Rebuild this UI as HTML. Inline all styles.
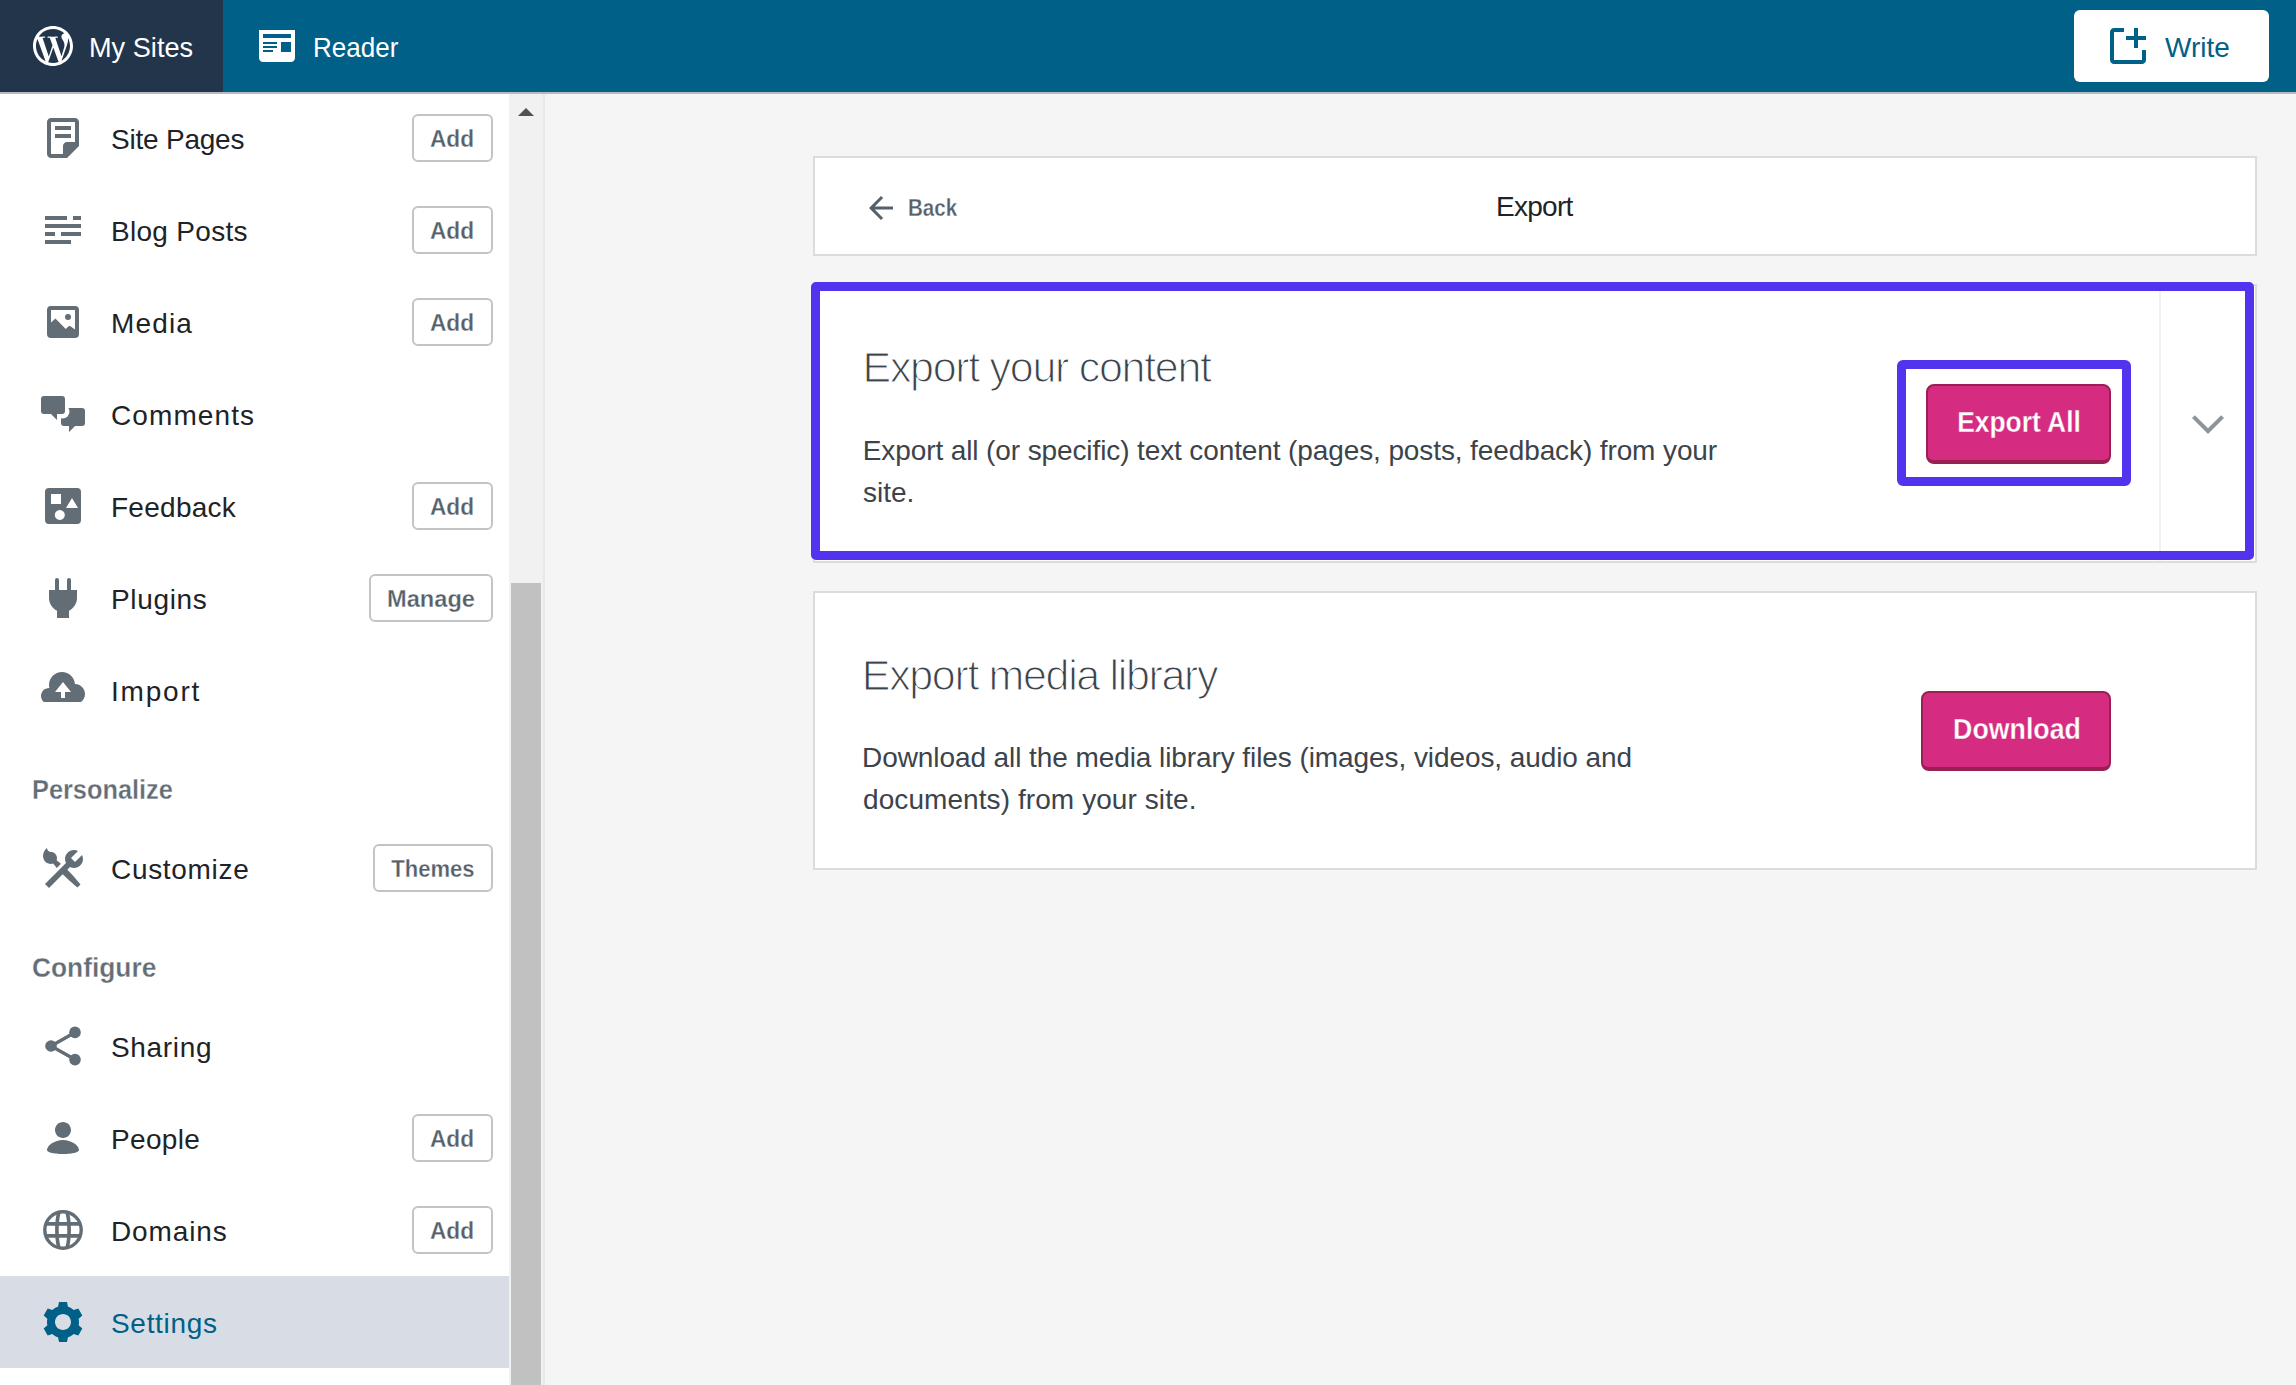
<!DOCTYPE html>
<html><head><meta charset="utf-8"><title>Export</title>
<style>
html,body{margin:0;padding:0;}
body{width:2296px;height:1385px;overflow:hidden;position:relative;background:#f5f5f5;font-family:"Liberation Sans",sans-serif;}
.t{position:absolute;white-space:nowrap;line-height:1;}
.i{position:absolute;display:block;}
.b{position:absolute;box-sizing:border-box;}
</style></head><body>
<div class="b" style="left:0;top:0;width:2296px;height:92px;background:#016087"></div>
<div class="b" style="left:0;top:92px;width:2296px;height:2px;background:#b6bbbf"></div>
<div class="b" style="left:0;top:0;width:223px;height:92px;background:#23354b"></div>
<svg class="i" style="left:29px;top:22px" width="48" height="48" viewBox="0 0 24 24"><g fill="#fff"><path d="M12 2C6.477 2 2 6.477 2 12s4.477 10 10 10 10-4.477 10-10S17.523 2 12 2zM3.5 12c0-1.232.264-2.402.736-3.459L8.291 19.65C5.456 18.272 3.5 15.365 3.5 12zm8.5 8.5c-.834 0-1.64-.12-2.401-.345l2.551-7.411 2.612 7.158c.018.042.039.081.061.117-.884.311-1.832.481-2.823.481zm1.172-12.485c.512-.027.973-.081.973-.081.458-.054.404-.727-.054-.701 0 0-1.377.108-2.266.108-.835 0-2.239-.108-2.239-.108-.459-.026-.512.674-.054.701 0 0 .434.054.892.081l1.324 3.629-1.860 5.579-3.096-9.208c.512-.027.973-.081.973-.081.458-.054.403-.727-.055-.701 0 0-1.376.108-2.265.108-.160 0-.347-.004-.547-.010C6.418 4.878 9.030 3.500 12 3.500c2.213 0 4.228.846 5.740 2.232-.037-.002-.072-.007-.110-.007-.835 0-1.427.727-1.427 1.509 0 .701.404 1.293.835 1.994.323.566.701 1.293.701 2.344 0 .727-.280 1.572-.647 2.748l-.848 2.833-3.072-9.138zm3.101 11.332l2.596-7.506c.485-1.213.646-2.182.646-3.045 0-.313-.021-.603-.057-.874.664 1.211 1.042 2.601 1.042 4.080 0 3.136-1.700 5.874-4.227 7.345z"/></g></svg>
<div class="t" style="left:88.6px;top:33.80px;font-size:28px;color:#fff;font-weight:400;transform:scaleX(0.97);transform-origin:0 0;">My Sites</div>
<svg class="i" style="left:253px;top:22px" width="48" height="48" viewBox="0 0 24 24"><g fill="#fff"><path d="M3 4v14c0 1.105.895 2 2 2h14c1.105 0 2-.895 2-2V4H3zm7 11H5v-1h5v1zm2-2H5v-1h7v1zm0-2H5v-1h7v1zm7 4h-5v-5h5v5zm0-7H5V6h14v2z"/></g></svg>
<div class="t" style="left:312.6px;top:33.80px;font-size:28px;color:#fff;font-weight:400;transform:scaleX(0.93);transform-origin:0 0;">Reader</div>
<div class="b" style="left:2074px;top:10px;width:195px;height:72px;background:#fff;border-radius:6px"></div>
<svg class="i" style="left:2104px;top:22px" width="48" height="48" viewBox="0 0 24 24"><g fill="#016087"><path d="M21 14v5c0 1.105-.895 2-2 2H5c-1.105 0-2-.895-2-2V5c0-1.105.895-2 2-2h5v2H5v14h14v-5h2z"/><path d="M17 7V3h-2v4h-4v2h4v4h2V9h4V7h-4z"/></g></svg>
<div class="t" style="left:2165px;top:33.80px;font-size:28px;color:#016087;font-weight:400;">Write</div>
<div class="b" style="left:0;top:94px;width:509px;height:1291px;background:#fff"></div>
<div class="b" style="left:509px;top:94px;width:34px;height:1291px;background:#f1f1f1"></div>
<div class="b" style="left:543px;top:94px;width:2px;height:1291px;background:#e8e8e8"></div>
<div class="b" style="left:511px;top:583px;width:30px;height:802px;background:#c1c1c1"></div>
<svg class="i" style="left:509px;top:94px" width="34" height="34"><path d="M9 22L17 14L25 22Z" fill="#505050"/></svg>
<div class="b" style="left:0;top:1276px;width:509px;height:92px;background:#d8dde5"></div>
<svg class="i" style="left:39px;top:114px" width="48" height="48" viewBox="0 0 24 24"><g fill="#636d75"><path d="M16 8H8V6h8v2zm0 2H8v2h8v-2zm4-6v12l-6 6H6c-1.105 0-2-.895-2-2V4c0-1.105.895-2 2-2h12c1.105 0 2 .895 2 2zm-2 10V4H6v16h6v-4c0-1.105.895-2 2-2h4z"/></g></svg>
<div class="t" style="left:111px;top:125.90px;font-size:28px;color:#1e2327;font-weight:400;letter-spacing:-0.22px;">Site Pages</div>
<div class="b" style="left:412px;top:114px;width:81px;height:48px;border:2px solid #c3c4c7;border-radius:6px;background:#fff"></div>
<div class="t" style="left:52.0px;width:800px;text-align:center;top:126.68px;font-size:24px;color:#55606a;font-weight:700;transform:scaleX(0.946);transform-origin:50% 0;-webkit-text-stroke:0.3px #fff;">Add</div>
<svg class="i" style="left:39px;top:206px" width="48" height="48" viewBox="0 0 24 24"><g fill="#636d75"><path d="M16 19H3v-2h13v2zm5-10H3v2h18V9zM3 5v2h11V5H3zm14 0v2h4V5h-4zm-6 8v2h10v-2H11zm-8 0v2h5v-2H3z"/></g></svg>
<div class="t" style="left:111px;top:217.90px;font-size:28px;color:#1e2327;font-weight:400;letter-spacing:0.3px;">Blog Posts</div>
<div class="b" style="left:412px;top:206px;width:81px;height:48px;border:2px solid #c3c4c7;border-radius:6px;background:#fff"></div>
<div class="t" style="left:52.0px;width:800px;text-align:center;top:218.68px;font-size:24px;color:#55606a;font-weight:700;transform:scaleX(0.946);transform-origin:50% 0;-webkit-text-stroke:0.3px #fff;">Add</div>
<svg class="i" style="left:39px;top:298px" width="48" height="48" viewBox="0 0 24 24"><g fill="#636d75"><path fill-rule="evenodd" d="M6 4h12a2 2 0 0 1 2 2v12a2 2 0 0 1-2 2H6a2 2 0 0 1-2-2V6a2 2 0 0 1 2-2zM6 6v6.3l2.2-2.1 5.2 5.3 1.3-1.25c.35-.33.85-.33 1.2 0L18 15.8V6z"/><circle cx="14.5" cy="9.5" r="1.5"/></g></svg>
<div class="t" style="left:111px;top:309.90px;font-size:28px;color:#1e2327;font-weight:400;letter-spacing:1.15px;">Media</div>
<div class="b" style="left:412px;top:298px;width:81px;height:48px;border:2px solid #c3c4c7;border-radius:6px;background:#fff"></div>
<div class="t" style="left:52.0px;width:800px;text-align:center;top:310.68px;font-size:24px;color:#55606a;font-weight:700;transform:scaleX(0.946);transform-origin:50% 0;-webkit-text-stroke:0.3px #fff;">Add</div>
<svg class="i" style="left:39px;top:390px" width="48" height="48" viewBox="0 0 24 24"><g fill="#636d75"><path d="M12.5 9H21.5a1.5 1.5 0 0 1 1.5 1.5v6a1.5 1.5 0 0 1-1.5 1.5H18l-3 3v-3h-2.5a1.5 1.5 0 0 1-1.5-1.5v-6A1.5 1.5 0 0 1 12.5 9z"/><circle cx="11.8" cy="10.8" r="3.45" fill="#fff"/><path d="M2.5 3h9a1.5 1.5 0 0 1 1.5 1.5v6a1.5 1.5 0 0 1-1.5 1.5H9v3l-3-3H2.5A1.5 1.5 0 0 1 1 10.5v-6A1.5 1.5 0 0 1 2.5 3z"/></g></svg>
<div class="t" style="left:111px;top:401.90px;font-size:28px;color:#1e2327;font-weight:400;letter-spacing:1.1px;">Comments</div>
<svg class="i" style="left:39px;top:482px" width="48" height="48" viewBox="0 0 24 24"><g fill="#636d75"><path fill-rule="evenodd" d="M5 3h14a2 2 0 0 1 2 2v14a2 2 0 0 1-2 2H5a2 2 0 0 1-2-2V5a2 2 0 0 1 2-2zM6 6v5h5V6zM16.5 8l-3 5h6zM10.4 14a2.5 2.5 0 1 0 0.001 0z"/></g></svg>
<div class="t" style="left:111px;top:493.90px;font-size:28px;color:#1e2327;font-weight:400;letter-spacing:0.27px;">Feedback</div>
<div class="b" style="left:412px;top:482px;width:81px;height:48px;border:2px solid #c3c4c7;border-radius:6px;background:#fff"></div>
<div class="t" style="left:52.0px;width:800px;text-align:center;top:494.68px;font-size:24px;color:#55606a;font-weight:700;transform:scaleX(0.946);transform-origin:50% 0;-webkit-text-stroke:0.3px #fff;">Add</div>
<svg class="i" style="left:39px;top:574px" width="48" height="48" viewBox="0 0 24 24"><g fill="#636d75"><path d="M16 8V3c0-.552-.448-1-1-1s-1 .448-1 1v5h-4V3c0-.552-.448-1-1-1s-1 .448-1 1v5H5v4c0 2.79 1.637 5.193 4 6.317V22h6v-3.683c2.363-1.124 4-3.527 4-6.317V8h-3z"/></g></svg>
<div class="t" style="left:111px;top:585.90px;font-size:28px;color:#1e2327;font-weight:400;letter-spacing:0.67px;">Plugins</div>
<div class="b" style="left:369px;top:574px;width:124px;height:48px;border:2px solid #c3c4c7;border-radius:6px;background:#fff"></div>
<div class="t" style="left:30.5px;width:800px;text-align:center;top:586.68px;font-size:24px;color:#55606a;font-weight:700;transform:scaleX(0.984);transform-origin:50% 0;-webkit-text-stroke:0.3px #fff;">Manage</div>
<svg class="i" style="left:39px;top:666px" width="48" height="48" viewBox="0 0 24 24"><g fill="#636d75"><path d="M18 9c-.01 0-.017.002-.025.003C17.72 5.646 14.922 3 11.5 3 7.91 3 5 5.910 5 9.5c0 .524.07 1.030.186 1.520C5.123 11.015 5.064 11 5 11c-2.210 0-4 1.790-4 4 0 1.202.540 2.267 1.380 3h18.593C22.196 17.090 23 15.643 23 14c0-2.760-2.240-5-5-5zm-5 4v3h-2v-3H8l4-5 4 5h-3z"/></g></svg>
<div class="t" style="left:111px;top:677.90px;font-size:28px;color:#1e2327;font-weight:400;letter-spacing:1.8px;">Import</div>
<svg class="i" style="left:39px;top:844px" width="48" height="48" viewBox="0 0 24 24"><g fill="#636d75"><path d="M2 6c0-1.505.78-3.08 2-4 0 .845.69 2 2 2 1.657 0 3 1.343 3 3 0 .386-.08.752-.212 1.09.74.594 1.476 1.19 2.19 1.81L8.9 11.98c-.62-.716-1.214-1.454-1.807-2.192C6.753 9.92 6.387 10 6 10c-2.21 0-4-1.79-4-4zm12.152 6.848l1.34-1.34c.607.304 1.283.492 2.008.492 2.485 0 4.5-2.015 4.5-4.5 0-.725-.188-1.4-.493-2.007L18 9l-2-2 3.507-3.507C18.9 3.188 18.225 3 17.5 3 15.015 3 13 5.015 13 7.5c0 .725.188 1.4.493 2.007L3 20l2 2 6.848-6.848c1.885 1.928 3.874 3.753 5.977 5.45l1.425 1.148 1.5-1.5-1.148-1.425c-1.697-2.103-3.522-4.092-5.45-5.977z"/></g></svg>
<div class="t" style="left:111px;top:855.90px;font-size:28px;color:#1e2327;font-weight:400;letter-spacing:0.68px;">Customize</div>
<div class="b" style="left:373px;top:844px;width:120px;height:48px;border:2px solid #c3c4c7;border-radius:6px;background:#fff"></div>
<div class="t" style="left:32.5px;width:800px;text-align:center;top:856.68px;font-size:24px;color:#55606a;font-weight:700;transform:scaleX(0.918);transform-origin:50% 0;-webkit-text-stroke:0.3px #fff;">Themes</div>
<svg class="i" style="left:39px;top:1022px" width="48" height="48" viewBox="0 0 24 24"><g fill="#636d75"><circle cx="6" cy="12" r="2.9"/><circle cx="18" cy="5.2" r="2.9"/><circle cx="18" cy="18.8" r="2.9"/><path d="M6 12L18 5.2M6 12L18 18.8" stroke="#636d75" stroke-width="1.7"/></g></svg>
<div class="t" style="left:111px;top:1033.90px;font-size:28px;color:#1e2327;font-weight:400;letter-spacing:0.67px;">Sharing</div>
<svg class="i" style="left:39px;top:1114px" width="48" height="48" viewBox="0 0 24 24"><g fill="#636d75"><path d="M12 4c2.21 0 4 1.79 4 4s-1.79 4-4 4-4-1.79-4-4 1.79-4 4-4zm0 16s8 0 8-2c0-2.4-3.9-5-8-5s-8 2.6-8 5c0 2 8 2 8 2z"/></g></svg>
<div class="t" style="left:111px;top:1125.90px;font-size:28px;color:#1e2327;font-weight:400;letter-spacing:0.32px;">People</div>
<div class="b" style="left:412px;top:1114px;width:81px;height:48px;border:2px solid #c3c4c7;border-radius:6px;background:#fff"></div>
<div class="t" style="left:52.0px;width:800px;text-align:center;top:1126.68px;font-size:24px;color:#55606a;font-weight:700;transform:scaleX(0.946);transform-origin:50% 0;-webkit-text-stroke:0.3px #fff;">Add</div>
<svg class="i" style="left:39px;top:1206px" width="48" height="48" viewBox="0 0 24 24"><g fill="#636d75"><defs><clipPath id="gc"><circle cx="12" cy="12" r="9.5"/></clipPath></defs><g fill="none" stroke="#636d75"><circle cx="12" cy="12" r="9.1" stroke-width="1.7"/><g clip-path="url(#gc)" stroke-width="1.82"><ellipse cx="12" cy="12" rx="3.05" ry="12"/><path d="M2 8.97H22M2 14.95H22"/></g></g></g></svg>
<div class="t" style="left:111px;top:1217.90px;font-size:28px;color:#1e2327;font-weight:400;letter-spacing:0.88px;">Domains</div>
<div class="b" style="left:412px;top:1206px;width:81px;height:48px;border:2px solid #c3c4c7;border-radius:6px;background:#fff"></div>
<div class="t" style="left:52.0px;width:800px;text-align:center;top:1218.68px;font-size:24px;color:#55606a;font-weight:700;transform:scaleX(0.946);transform-origin:50% 0;-webkit-text-stroke:0.3px #fff;">Add</div>
<svg class="i" style="left:39px;top:1298px" width="48" height="48" viewBox="0 0 24 24"><g fill="#016087"><path d="M20 12c0-.568-.06-1.122-.174-1.656l1.834-1.612-2-3.464-2.322.786c-.82-.736-1.787-1.308-2.86-1.657L14 2h-4l-.48 2.396c-1.07.35-2.04.92-2.858 1.657L4.34 5.268l-2 3.464 1.834 1.612C4.06 10.878 4 11.432 4 12s.06 1.122.174 1.656L2.34 15.268l2 3.464 2.322-.786c.82.736 1.787 1.308 2.86 1.657L10 22h4l.48-2.396c1.07-.35 2.038-.92 2.858-1.657l2.322.786 2-3.464-1.834-1.613c.113-.535.174-1.09.174-1.657zm-8 4c-2.21 0-4-1.79-4-4s1.79-4 4-4 4 1.79 4 4-1.79 4-4 4z"/></g></svg>
<div class="t" style="left:111px;top:1309.90px;font-size:28px;color:#016087;font-weight:400;letter-spacing:0.69px;">Settings</div>
<div class="t" style="left:31.5px;top:776.30px;font-size:28px;color:#636d75;font-weight:700;transform:scaleX(0.905);transform-origin:0 0;-webkit-text-stroke:0.3px #fff;">Personalize</div>
<div class="t" style="left:32px;top:953.80px;font-size:28px;color:#636d75;font-weight:700;transform:scaleX(0.94);transform-origin:0 0;-webkit-text-stroke:0.3px #fff;">Configure</div>
<div class="b" style="left:813px;top:156px;width:1444px;height:100px;background:#fff;border:2px solid #dcdcde"></div>
<svg class="i" style="left:863px;top:190px" width="36" height="36" viewBox="0 0 24 24"><g fill="#55606a"><path d="M20 11H7.83l5.59-5.59L12 4l-8 8 8 8 1.41-1.41L7.83 13H20v-2z"/></g></svg>
<div class="t" style="left:908px;top:195.68px;font-size:24px;color:#55606a;font-weight:700;transform:scaleX(0.856);transform-origin:0 0;-webkit-text-stroke:0.3px #fff;">Back</div>
<div class="t" style="left:1134.3px;width:800px;text-align:center;top:193.30px;font-size:28px;color:#1e2327;font-weight:400;letter-spacing:-0.74px;">Export</div>
<div class="b" style="left:813px;top:284px;width:1444px;height:279px;background:#fff;border:2px solid #dcdcde"></div>
<div class="b" style="left:2159px;top:286px;width:2px;height:275px;background:#f0f0f1"></div>
<svg class="i" style="left:2184px;top:400px" width="48" height="48" viewBox="0 0 24 24"><g fill="#8d959b"><path d="M20 9l-8 8-8-8 1.414-1.414L12 14.172l6.586-6.586L20 9z"/></g></svg>
<div class="t" style="left:862.5px;top:346.40px;font-size:43px;color:#3c434a;font-weight:400;letter-spacing:-1.3px;-webkit-text-stroke:1.2px #fff;">Export your content</div>
<div class="t" style="left:862.8px;top:437.00px;font-size:28px;color:#3c434a;font-weight:400;letter-spacing:-0.11px;">Export all (or specific) text content (pages, posts, feedback) from your</div>
<div class="t" style="left:863px;top:478.80px;font-size:28px;color:#3c434a;font-weight:400;">site.</div>
<div class="b" style="left:1926px;top:384px;width:185px;height:80px;background:#d52c82;border:2px solid #992053;border-bottom-width:4px;border-radius:8px"></div>
<div class="t" style="left:1619px;width:800px;text-align:center;top:407.95px;font-size:29px;color:#fff;font-weight:700;transform:scaleX(0.91);transform-origin:50% 0;-webkit-text-stroke:0.3px #d52c82;">Export All</div>
<div class="b" style="left:813px;top:591px;width:1444px;height:279px;background:#fff;border:2px solid #dcdcde"></div>
<div class="t" style="left:861.8px;top:653.50px;font-size:43px;color:#3c434a;font-weight:400;letter-spacing:-1.35px;-webkit-text-stroke:1.2px #fff;">Export media library</div>
<div class="t" style="left:862px;top:744.30px;font-size:28px;color:#3c434a;font-weight:400;letter-spacing:-0.08px;">Download all the media library files (images, videos, audio and</div>
<div class="t" style="left:863px;top:785.60px;font-size:28px;color:#3c434a;font-weight:400;letter-spacing:0.08px;">documents) from your site.</div>
<div class="b" style="left:1921px;top:691px;width:190px;height:80px;background:#d52c82;border:2px solid #992053;border-bottom-width:4px;border-radius:8px"></div>
<div class="t" style="left:1616.7px;width:800px;text-align:center;top:714.75px;font-size:29px;color:#fff;font-weight:700;transform:scaleX(0.922);transform-origin:50% 0;-webkit-text-stroke:0.3px #d52c82;">Download</div>
<div class="b" style="left:811px;top:282px;width:1443px;height:278px;border:9px solid #5333ed;border-radius:5px"></div>
<div class="b" style="left:1897px;top:360px;width:234px;height:126px;border:9px solid #5333ed;border-radius:6px"></div>
</body></html>
